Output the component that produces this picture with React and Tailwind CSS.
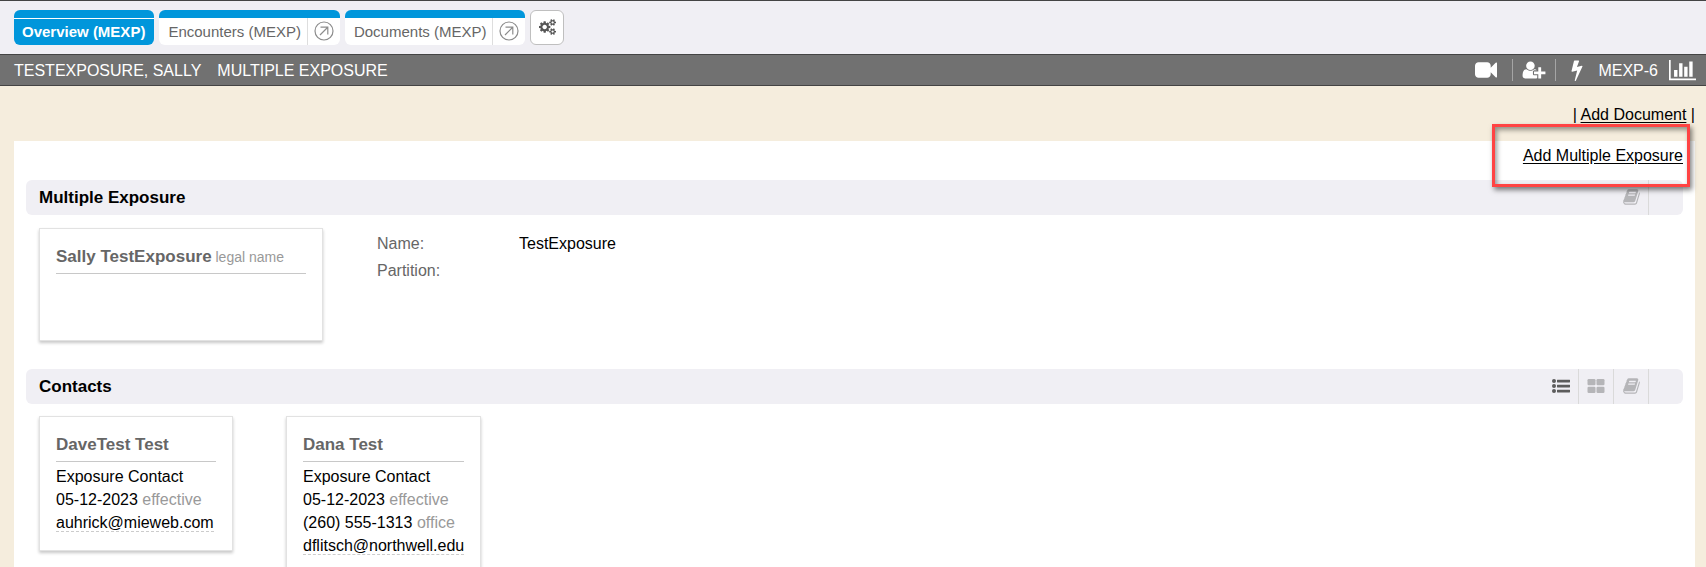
import React from 'react';

const ICONS = {
  cogs: {
    width: 1920,
    path: 'M896 896q0-106-75-181t-181-75-181 75-75 181 75 181 181 75 181-75 75-181zm768 512q0-52-38-90t-90-38-90 38-38 90q0 53 37.5 90.5t90.5 37.5 90.5-37.5 37.5-90.5zm0-1024q0-52-38-90t-90-38-90 38-38 90q0 53 37.5 90.5t90.5 37.5 90.5-37.5 37.5-90.5zm-384 421v185q0 10-7 19.5t-16 10.5l-155 24q-11 35-32 76 34 48 90 115 7 11 7 20 0 12-7 19-23 30-82.5 89.5t-78.5 59.5q-11 0-21-7l-115-90q-37 19-77 31-11 108-23 155-7 24-30 24h-186q-11 0-20-7.5t-10-17.5l-23-153q-34-10-75-31l-118 89q-7 7-20 7-11 0-21-8-144-133-144-160 0-9 7-19 10-14 41-53t47-61q-23-44-35-82l-152-24q-10-1-17-9.5t-7-19.5v-185q0-10 7-19.5t16-10.5l155-24q11-35 32-76-34-48-90-115-7-11-7-20 0-12 7-20 22-30 82-89t79-59q11 0 21 7l115 90q34-18 77-32 11-108 23-154 7-24 30-24h186q11 0 20 7.5t10 17.5l23 153q34 10 75 31l118-89q8-7 20-7 11 0 21 8 144 133 144 160 0 8-7 19-12 16-42 54t-45 60q23 48 34 82l152 23q10 2 17 10.5t7 19.5zm640 533v140q0 16-149 31-12 27-30 52 51 113 51 138 0 4-4 7-122 71-124 71-8 0-46-47t-52-68q-20 2-30 2t-30-2q-14 21-52 68t-46 47q-2 0-124-71-4-3-4-7 0-25 51-138-18-25-30-52-149-15-149-31v-140q0-16 149-31 13-29 30-52-51-113-51-138 0-4 4-7 4-2 35-20t59-34 30-16q8 0 46 46.5t52 67.5q20-2 30-2t30 2q51-71 92-112l6-2q4 0 124 70 4 3 4 7 0 25-51 138 17 23 30 52 149 15 149 31zm0-1024v140q0 16-149 31-12 27-30 52 51 113 51 138 0 4-4 7-122 71-124 71-8 0-46-47t-52-68q-20 2-30 2t-30-2q-14 21-52 68t-46 47q-2 0-124-71-4-3-4-7 0-25 51-138-18-25-30-52-149-15-149-31v-140q0-16 149-31 13-29 30-52-51-113-51-138 0-4 4-7 4-2 35-20t59-34 30-16q8 0 46 46.5t52 67.5q20-2 30-2t30 2q51-71 92-112l6-2q4 0 124 70 4 3 4 7 0 25-51 138 17 23 30 52 149 15 149 31z',
  },
  video: {
    width: 1792,
    path: 'M1792 352v1088q0 42-39 59-13 5-25 5-27 0-45-19l-403-403v166q0 119-84.5 203.5t-203.5 84.5h-704q-119 0-203.5-84.5t-84.5-203.5v-704q0-119 84.5-203.5t203.5-84.5h704q119 0 203.5 84.5t84.5 203.5v165l403-402q18-19 45-19 12 0 25 5 39 17 39 59z',
  },
  userPlus: {
    width: 2048,
    path: 'M704 896q-159 0-271.5-112.5t-112.5-271.5 112.5-271.5 271.5-112.5 271.5 112.5 112.5 271.5-112.5 271.5-271.5 112.5zm960 128h352q13 0 22.5 9.5t9.5 22.5v192q0 13-9.5 22.5t-22.5 9.5h-352v352q0 13-9.5 22.5t-22.5 9.5h-192q-13 0-22.5-9.5t-9.5-22.5v-352h-352q-13 0-22.5-9.5t-9.5-22.5v-192q0-13 9.5-22.5t22.5-9.5h352v-352q0-13 9.5-22.5t22.5-9.5h192q13 0 22.5 9.5t9.5 22.5v352zm-736 224q0 52 38 90t90 38h256v238q-68 50-171 50h-874q-121 0-194-69t-73-190q0-53 3.5-103.5t14-109 26.5-108.5 43-97.5 62-81 85.5-53.5 111.5-20q19 0 39 17 79 61 154.5 91.5t164.5 30.5 164.5-30.5 154.5-91.5q20-17 39-17 132 0 217 96h-223q-52 0-90 38t-38 90v192z',
  },
  bolt: {
    width: 896,
    path: 'M885 566q18 20 7 44l-540 1157q-13 25-42 25-4 0-14-2-17-5-25.5-19t-4.5-30l197-808-406 101q-4 1-12 1-18 0-31-11-18-15-13-39l201-825q4-14 16-23t28-9h328q19 0 32 12.5t13 29.5q0 8-5 18l-171 463 396-98q8-2 12-2 19 0 34 15z',
  },
  chart: {
    width: 2048,
    path: 'M640 896v512h-256v-512h256zm384-512v1024h-256v-1024h256zm1024 1152v128h-2048v-1536h128v1408h1920zm-640-896v768h-256v-768h256zm384-384v1152h-256v-1152h256z',
  },
  book: {
    width: 1664,
    path: 'M1639 478q40 57 18 129l-275 906q-19 64-76.5 107.5t-122.5 43.5h-923q-77 0-148.5-53.5t-99.5-131.5q-24-67-2-127 0-4 3-27t4-37q1-8-3-21.5t-3-19.5q2-11 8-21t16.5-23.5 16.5-23.5q23-38 45-91.5t30-91.5q3-10 .5-30t-.5-28q3-11 17-28t17-23q21-36 42-92t25-90q1-9-2.5-32t.5-28q4-13 22-30.5t22-22.5q19-26 42.5-84.5t27.5-96.5q1-8-3-25.5t-2-26.5q2-8 9-18t18-23 17-21q8-12 16.5-30.5t15-35 16-36 19.5-32 26.5-23.5 36-11.5 47.5 5.5l-1 3q38-9 51-9h761q74 0 114 56t18 130l-274 906q-36 119-71.5 153.5t-128.5 34.5h-869q-27 0-38 15-11 16-1 43 24 70 144 70h923q29 0 56-15.5t35-41.5l300-987q7-22 5-57 38 15 59 43zm-1064 2q-4 13 2 22.5t20 9.5h608q13 0 25.5-9.5t16.5-22.5l21-64q4-13-2-22.5t-20-9.5h-608q-13 0-25.5 9.5t-16.5 22.5zm-83 256q-4 13 2 22.5t20 9.5h608q13 0 25.5-9.5t16.5-22.5l21-64q4-13-2-22.5t-20-9.5h-608q-13 0-25.5 9.5t-16.5 22.5z',
  },
};

const TABS = ['Encounters (MEXP)', 'Documents (MEXP)'];

const CONTACTS = [
  {
    name: 'DaveTest Test',
    lines: [
      { text: 'Exposure Contact' },
      { text: '05-12-2023', note: 'effective' },
    ],
    email: 'auhrick@mieweb.com',
  },
  {
    name: 'Dana Test',
    lines: [
      { text: 'Exposure Contact' },
      { text: '05-12-2023', note: 'effective' },
      { text: '(260) 555-1313', note: 'office' },
    ],
    email: 'dflitsch@northwell.edu',
  },
];

function Icon({ name, className }) {
  const icon = ICONS[name];
  return (
    <svg viewBox={`0 0 ${icon.width} 1792`} className={className} fill="currentColor" aria-hidden="true">
      <path d={icon.path} />
    </svg>
  );
}

function OpenIcon() {
  return (
    <svg viewBox="0 0 20 20" className="size-5" fill="none" stroke="#8c8c8c" strokeWidth="1.2" aria-hidden="true">
      <circle cx="10" cy="10" r="9" />
      <path d="M6 14l7.5-7.5M6.5 6.2h7.3v7.3" />
    </svg>
  );
}

function ListIcon() {
  return (
    <svg viewBox="0 0 18 16" className="h-4 w-[18px]" fill="currentColor" aria-hidden="true">
      <circle cx="2" cy="3" r="2" />
      <circle cx="2" cy="8" r="2" />
      <circle cx="2" cy="13" r="2" />
      <rect x="5" y="1.7" width="13" height="2.7" rx="0.4" />
      <rect x="5" y="6.7" width="13" height="2.7" rx="0.4" />
      <rect x="5" y="11.7" width="13" height="2.7" rx="0.4" />
    </svg>
  );
}

function GridIcon() {
  return (
    <svg viewBox="0 0 18 16" className="h-4 w-[18px]" fill="currentColor" aria-hidden="true">
      <rect x="0.5" y="1" width="8" height="6.3" rx="1.2" />
      <rect x="9.5" y="1" width="8" height="6.3" rx="1.2" />
      <rect x="0.5" y="8.7" width="8" height="6.3" rx="1.2" />
      <rect x="9.5" y="8.7" width="8" height="6.3" rx="1.2" />
    </svg>
  );
}

function HeaderButton({ label, className, children }) {
  return (
    <button
      type="button"
      aria-label={label}
      className={`flex w-[35px] items-center justify-center border-r border-[#dadada] pb-[2px] ${className}`}
    >
      {children}
    </button>
  );
}

function SectionHeader({ title, children }) {
  return (
    <div className="flex h-[35px] rounded-md bg-[#f0eff4] pr-[34px]">
      <h2 className="grow pl-[13px] text-[17px] leading-[35px] font-bold text-black">{title}</h2>
      {children}
      <HeaderButton label="Reference" className="text-[#b5b5b8]">
        <Icon name="book" className="h-[18px] w-[17px]" />
      </HeaderButton>
    </div>
  );
}

function Card({ title, note, className = '', children }) {
  return (
    <div className={`border border-[#e2e2e2] p-4 shadow-[0_2px_3px_rgba(0,0,0,0.22)] ${className}`}>
      <h3 className="border-b border-[#c8c8c8] pb-1 text-[17px] leading-6 font-bold text-[#666]">
        {title}
        {note && <span className="text-sm leading-6 font-normal text-[#999]"> {note}</span>}
      </h3>
      {children}
    </div>
  );
}

export default function App() {
  return (
    <div className="min-h-screen bg-[#f5eddd] font-['Liberation_Sans',Arial,sans-serif] text-base text-black">
      <nav className="flex gap-[5px] border-t border-[#444] bg-[#f0eff4] px-[14px] py-[9px] text-[15px]">
        <a href="#overview" className="h-[35px] overflow-hidden rounded-md bg-[#0096db] font-bold text-white">
          <span className="block h-[9px] border-b border-white" />
          <span className="block pr-[9px] pl-2 leading-[25px]">Overview (MEXP)</span>
        </a>
        {TABS.map((tab) => (
          <div key={tab} className="flex h-[35px] overflow-hidden rounded-md border-t-8 border-[#0096db] bg-white text-[#666]">
            <a href="#tab" className="border-r border-[#dedede] pr-[6px] pl-[9px] leading-[27px]">
              {tab}
            </a>
            <button type="button" aria-label={`Open ${tab}`} className="flex w-8 items-center justify-center pb-[2px]">
              <OpenIcon />
            </button>
          </div>
        ))}
        <button
          type="button"
          aria-label="Tab settings"
          className="flex h-[35px] w-[34px] items-center justify-center rounded-md border border-[#bfbfbf] bg-white pb-[2px] text-[#555]"
        >
          <Icon name="cogs" className="h-4 w-[17px]" />
        </button>
      </nav>

      <header className="flex items-center border-y border-[#444] bg-[#717171] pr-[10px] pl-[14px] leading-7 text-white">
        <span className="pt-[2px]">TESTEXPOSURE, SALLY</span>
        <span className="grow pt-[2px] pl-4">MULTIPLE EXPOSURE</span>
        <button type="button" aria-label="Video" className="flex h-[22px] items-center border-r border-[#a5a5a5] pr-[15px]">
          <Icon name="video" className="h-[22px] w-[22px]" />
        </button>
        <button type="button" aria-label="Add person" className="flex h-[22px] items-center border-r border-[#a5a5a5] px-[9px]">
          <Icon name="userPlus" className="h-5 w-6" />
        </button>
        <button type="button" aria-label="Quick actions" className="flex items-center px-[15px]">
          <Icon name="bolt" className="h-[22px] w-3" />
        </button>
        <span className="pt-[2px] pr-[11px]">MEXP-6</span>
        <button type="button" aria-label="Chart" className="flex items-center">
          <Icon name="chart" className="h-6 w-[27px]" />
        </button>
      </header>

      <div className="pt-[19px] pr-[11px] pb-4 text-right leading-5">
        | <a href="#add-document" className="underline underline-offset-2">Add Document</a> |
      </div>

      <main className="mr-[11px] ml-[14px] bg-white px-3 pt-[5px] pb-4">
        <div className="mb-[14px] text-right leading-5">
          <span className="relative inline-block">
            <a href="#add-exposure" className="underline underline-offset-2">Add Multiple Exposure</a>
            <span className="pointer-events-none absolute -top-[22px] -right-[7px] -bottom-[21px] -left-[31px] border-[3px] border-[#ff4343] shadow-[2px_3px_5px_rgba(0,0,0,0.5),inset_2px_3px_5px_rgba(0,0,0,0.4)]" />
          </span>
        </div>

        <SectionHeader title="Multiple Exposure" />
        <div className="mt-[13px] mb-7 flex gap-[54px] pl-[13px]">
          <Card title="Sally TestExposure" note="legal name" className="min-h-[113px] w-[284px]" />
          <dl className="grid grid-cols-[142px_auto] content-start pt-[2px] leading-[27px]">
            <dt className="text-[#666]">Name:</dt>
            <dd>TestExposure</dd>
            <dt className="text-[#666]">Partition:</dt>
            <dd />
          </dl>
        </div>

        <SectionHeader title="Contacts">
          <HeaderButton label="List view" className="text-[#5c5c5c]">
            <ListIcon />
          </HeaderButton>
          <HeaderButton label="Grid view" className="text-[#b5b5b8]">
            <GridIcon />
          </HeaderButton>
        </SectionHeader>
        <div className="mt-3 flex items-start gap-[53px] pl-[13px]">
          {CONTACTS.map((c) => (
            <Card key={c.name} title={c.name} className="min-w-[194px]">
              <ul className="pt-[3px] leading-[23px]">
                {c.lines.map((line) => (
                  <li key={line.text}>
                    {line.text}
                    {line.note && <span className="text-[#999]"> {line.note}</span>}
                  </li>
                ))}
                <li>
                  <a href={`mailto:${c.email}`} className="border-b border-dashed border-[#ccc]">
                    {c.email}
                  </a>
                </li>
              </ul>
            </Card>
          ))}
        </div>
      </main>
    </div>
  );
}
